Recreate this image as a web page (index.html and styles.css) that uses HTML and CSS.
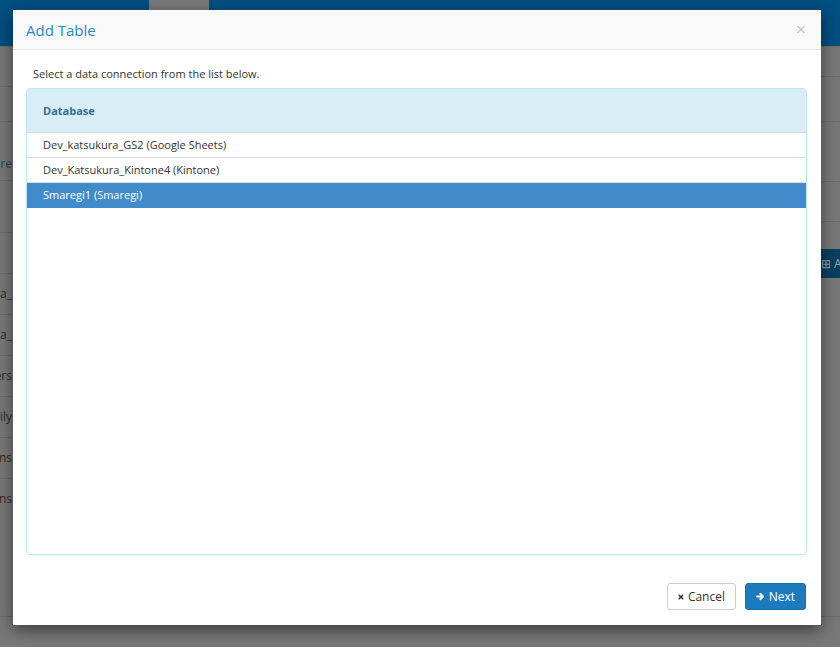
FILE: index.html
```html
<!DOCTYPE html>
<html lang="en">
<head>
    <meta charset="UTF-8">
    <title>Add Table</title>
    <link rel="stylesheet" href="styles.css">
</head>
<body>
    <div class="page">
        <div class="topbar">
            <div class="topbar-tab"></div>
        </div>
        <div class="content">
            <div class="side-list">
                <div class="side-row r1"></div>
                <div class="side-row r2"></div>
                <div class="side-row r3 link">Procedure</div>
                <div class="side-row r4"></div>
                <div class="side-row"></div>
                <div class="side-row">katsukura_</div>
                <div class="side-row">katsukura_</div>
                <div class="side-row">Customers</div>
                <div class="side-row">Daily</div>
                <div class="side-row">Transactions</div>
                <div class="side-row last">Transactions</div>
            </div>
            <div class="right-col">
                <div class="right-row r1"></div>
                <div class="right-row r2"></div>
                <div class="right-row r3"></div>
                <div class="right-row r4"></div>
                <div class="add-btn">&#8862; Add Table</div>
            </div>
        </div>
    </div>

    <div class="modal">
        <div class="modal-header">
            <h4 class="modal-title">Add Table</h4>
            <span class="close">&times;</span>
        </div>
        <div class="modal-body">
            <p class="hint">Select a data connection from the list below.</p>
            <div class="panel">
                <div class="panel-heading">Database</div>
                <div class="list">
                    <div class="list-item">Dev_katsukura_GS2 (Google Sheets)</div>
                    <div class="list-item">Dev_Katsukura_Kintone4 (Kintone)</div>
                    <div class="list-item selected">Smaregi1 (Smaregi)</div>
                </div>
            </div>
        </div>
        <div class="modal-footer">
            <button class="btn btn-default">
                <svg width="8" height="8" viewBox="0 0 10 10"><path d="M2 2 L8 8 M8 2 L2 8" stroke="#333" stroke-width="2.6" stroke-linecap="round"/></svg>
                Cancel
            </button>
            <button class="btn btn-primary">
                <svg width="11" height="11" viewBox="0 0 12 12"><path d="M1.5 6 H9.5 M6 2.2 L9.8 6 L6 9.8" stroke="#fff" stroke-width="2.6" fill="none" stroke-linecap="round" stroke-linejoin="round"/></svg>
                Next
            </button>
        </div>
    </div>
</body>
</html>
```

FILE: styles.css
```css
body {
    margin: 0;
    font-family: "Open Sans", "Noto Sans", sans-serif;
    font-size: 11px;
    color: #333;
    background-color: #787878;
    overflow: hidden;
}
.page {
    height: 647px;
    display: flex;
    flex-direction: column;
}
.topbar {
    height: 46px;
    background-color: #024f81;
    border-bottom: 1px solid #6a6a6a;
}
.topbar-tab {
    margin-left: 149px;
    width: 60px;
    height: 46px;
    background-color: #7a7a7a;
}
.content {
    height: 569px;
    display: flex;
    justify-content: space-between;
    border-bottom: 1px solid #6a6a6a;
}
.side-list {
    width: 12px;
    overflow: hidden;
    display: flex;
    flex-direction: column;
    align-items: flex-end;
}
.side-row {
    height: 40px;
    line-height: 40px;
    border-bottom: 1px solid #6c6c6c;
    color: #2e2a26;
    font-size: 12px;
    white-space: nowrap;
    width: 200px;
    text-align: right;
    flex-shrink: 0;
}
.side-row.r1 {
    height: 39px;
}
.side-row.r2 {
    height: 34px;
}
.side-row.r3 {
    height: 58px;
    line-height: 84px;
}
.side-row.r4 {
    height: 51px;
}
.side-row.link {
    color: #1f4769;
}
.side-row.last {
    border-bottom: none;
}
.right-col {
    width: 19px;
    overflow: hidden;
}
.right-row {
    border-bottom: 1px solid #6c6c6c;
}
.right-row.r1 {
    height: 29px;
}
.right-row.r2 {
    height: 44px;
}
.right-row.r3 {
    height: 59px;
}
.right-row.r4 {
    height: 39px;
}
.add-btn {
    margin-top: 27px;
    width: 120px;
    height: 29px;
    line-height: 29px;
    background-color: #0a3f60;
    color: #9aa7b0;
    font-size: 12px;
    white-space: nowrap;
}

.modal {
    position: absolute;
    left: 13px;
    top: 10px;
    width: 808px;
    height: 615px;
    background-color: #fff;
    box-shadow: 0 5px 15px rgba(0, 0, 0, 0.5);
    display: flex;
    flex-direction: column;
}
.modal-header {
    height: 39px;
    background-color: #f9f9f9;
    border-bottom: 1px solid #e5e5e5;
    display: flex;
    align-items: center;
    justify-content: space-between;
    padding: 0 15px 0 13px;
}
.modal-title {
    margin: 0;
    font-size: 15px;
    font-weight: normal;
    color: #2c88c9;
}
.close {
    font-size: 18px;
    color: #c8c8c8;
    line-height: 1;
    margin-top: -2px;
}
.modal-body {
    flex: 1;
    padding: 0 14px 0 13px;
    display: flex;
    flex-direction: column;
}
.hint {
    margin: 16px 0 0 7px;
    height: 22px;
}
.panel {
    height: 465px;
    border: 1px solid #bce8f1;
    border-radius: 4px;
    overflow: hidden;
}
.panel-heading {
    height: 43px;
    line-height: 43px;
    padding-left: 16px;
    background-color: #d9edf7;
    border-bottom: 1px solid #d0dde3;
    color: #31708f;
    font-weight: bold;
}
.list-item {
    height: 24px;
    line-height: 24px;
    padding-left: 16px;
    border-bottom: 1px solid #ddd;
}
.list-item.selected {
    background-color: #428bca;
    border-bottom-color: #428bca;
    color: #fff;
}
.modal-footer {
    height: 70px;
    display: flex;
    justify-content: flex-end;
    align-items: flex-start;
    gap: 9px;
    padding: 28px 15px 0 0;
    box-sizing: border-box;
}
.btn {
    height: 27px;
    border-radius: 3px;
    font-family: inherit;
    font-size: 12px;
    padding: 0 10px;
    display: flex;
    align-items: center;
    gap: 4px;
    cursor: pointer;
}
.btn-default {
    background-color: #fff;
    border: 1px solid #ccc;
    color: #333;
    width: 69px;
}
.btn-primary {
    background-color: #1c7bbd;
    border: 1px solid #1a70aa;
    color: #fff;
    width: 61px;
}
```
